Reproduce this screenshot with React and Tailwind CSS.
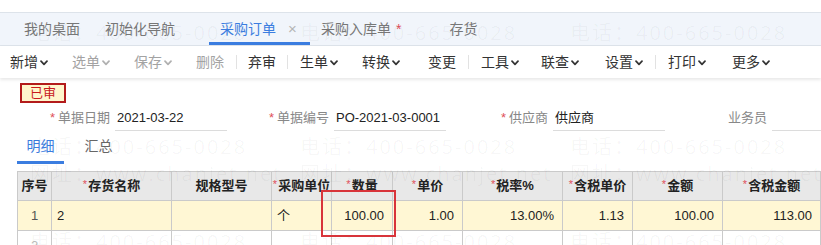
import React from 'react';

const FONT = { fontFamily: '"Liberation Sans", "Noto Sans CJK SC", sans-serif' };

const Chevron = ({ color = '#333' }) => (
    <svg width="8" height="6" viewBox="0 0 8 6" className="ml-[2px] mt-[1px]">
        <polyline points="1,1.2 4,4.4 7,1.2" fill="none" stroke={color} strokeWidth="1.7" strokeLinejoin="round" strokeLinecap="round" />
    </svg>
);

const Tool = ({ label, menu, disabled, ml }) => (
    <div className={`flex items-center ${ml} ${disabled ? 'text-[#a3a3a3]' : 'text-[#333]'}`}>
        <span>{label}</span>
        {menu && <Chevron color={disabled ? '#b0b0b0' : '#333'} />}
    </div>
);

const Sep = ({ ml }) => <div className={`w-px h-[14px] bg-[#e2e2e2] ${ml}`} />;

const Field = ({ label, value, required }) => (
    <div className="flex items-end w-[219px]">
        <div className="w-[102px] h-[26px] flex items-center justify-end text-[13px] text-[#888] whitespace-nowrap">
            {required && <span className="text-[#e0505a] mr-[3px]">*</span>}
            {label}
        </div>
        <div className="w-[112px] ml-[5px] h-[26px] flex items-center border-b border-[#dcdcdc] pl-[2px] text-[13px] text-[#222] whitespace-nowrap">
            {value}
        </div>
    </div>
);

const cols = [
    { w: 'w-[34px]', label: '序号' },
    { w: 'w-[120px]', label: '存货名称', req: true },
    { w: 'w-[100px]', label: '规格型号' },
    { w: 'w-[60px]', label: '采购单位', req: true },
    { w: 'w-[61px]', label: '数量', req: true },
    { w: 'w-[70px]', label: '单价', req: true },
    { w: 'w-[100px]', label: '税率%', req: true },
    { w: 'w-[70px]', label: '含税单价', req: true },
    { w: 'w-[90px]', label: '金额', req: true },
    { w: 'w-[98px]', label: '含税金额', req: true },
];

const row1 = [
    { v: '1', a: 'justify-center text-[#555]' },
    { v: '2', a: 'justify-start pl-[5px]' },
    { v: '', a: '' },
    { v: '个', a: 'justify-start pl-[5px]' },
    { v: '100.00', a: 'justify-end pr-[8px]' },
    { v: '1.00', a: 'justify-end pr-[8px]' },
    { v: '13.00%', a: 'justify-end pr-[8px]' },
    { v: '1.13', a: 'justify-end pr-[8px]' },
    { v: '100.00', a: 'justify-end pr-[8px]' },
    { v: '113.00', a: 'justify-end pr-[8px]' },
];

const marks = [
    { t: '电话：400-665-0028', y: 'top-[18px]' },
    { t: '网址：www.chanjet.net', y: 'top-[47px]' },
    { t: '电话：400-665-0028', y: 'top-[132px]' },
    { t: '网址：www.chanjet.net', y: 'top-[159px]' },
    { t: '电话：400-665-0028', y: 'top-[227px]' },
];

export default function App() {
    return (
        <div className="relative w-[821px] h-[245px] overflow-hidden bg-white text-[14px]" style={FONT}>
            <div className="h-[12px] bg-white" />

            {/* tabs */}
            <div className="h-[34px] bg-[#f1f5fb] border-t border-b border-[#dde3ea] flex items-stretch whitespace-nowrap">
                <div className="flex items-center ml-[24px] text-[#777]">我的桌面</div>
                <div className="flex items-center ml-[25px] text-[#777]">初始化导航</div>
                <div className="flex items-center ml-[34px] w-[101px] pl-[11px] border-b-[3px] border-[#3b7de0] pt-[3px] text-[#3b7de0]">
                    采购订单
                    <span className="ml-[12px] text-[#b5b5b5] text-[15px]">×</span>
                </div>
                <div className="flex items-center pl-[11px] text-[#777]">
                    采购入库单<span className="text-[#e0505a] ml-[5px]">*</span>
                </div>
                <div className="flex items-center ml-[48px] text-[#777]">存货</div>
            </div>

            {/* toolbar */}
            <div className="relative z-10 h-[32px] bg-white flex items-center whitespace-nowrap shadow-[0_2px_3px_rgba(0,0,0,0.09)]">
                <Tool label="新增" menu ml="ml-[10px]" />
                <Tool label="选单" menu disabled ml="ml-[24px]" />
                <Tool label="保存" menu disabled ml="ml-[24px]" />
                <Tool label="删除" disabled ml="ml-[24px]" />
                <Sep ml="ml-[12px]" />
                <Tool label="弃审" ml="ml-[11px]" />
                <Sep ml="ml-[11px]" />
                <Tool label="生单" menu ml="ml-[12px]" />
                <Tool label="转换" menu ml="ml-[24px]" />
                <Tool label="变更" ml="ml-[28px]" />
                <Sep ml="ml-[12px]" />
                <Tool label="工具" menu ml="ml-[12px]" />
                <Tool label="联查" menu ml="ml-[22px]" />
                <Tool label="设置" menu ml="ml-[26px]" />
                <Sep ml="ml-[12px]" />
                <Tool label="打印" menu ml="ml-[12px]" />
                <Tool label="更多" menu ml="ml-[26px]" />
            </div>

            {/* status stamp */}
            <div className="ml-[20px] mt-[5px] w-[46px] h-[20px] border-2 border-[#b31b1b] bg-[#fff6cc] flex items-center justify-center text-[13px] text-[#c8191e]">
                已审
            </div>

            {/* header fields */}
            <div className="flex ml-[8px] mt-[2px]">
                <Field label="单据日期" value="2021-03-22" required />
                <Field label="单据编号" value="PO-2021-03-0001" required />
                <Field label="供应商" value="供应商" required />
                <Field label="业务员" value="" />
            </div>

            {/* detail tabs */}
            <div className="flex ml-[17px] h-[33px]">
                <div className="w-[47px] flex items-center justify-center pt-[1px] border-b-[3px] border-[#3b7de0] text-[#3b7de0]">明细</div>
                <div className="w-[47px] ml-[11px] flex items-center justify-center pb-[2px] text-[#666]">汇总</div>
            </div>

            {/* grid */}
            <div className="ml-[17px] mt-[7px] text-[13px] whitespace-nowrap">
                <div className="flex h-[30px] bg-[#e8e8e8] border-t border-l border-[#cacaca] font-bold text-[#222]">
                    {cols.map((c) => (
                        <div key={c.label} className={`${c.w} shrink-0 flex items-center justify-center border-r border-b border-[#cacaca] overflow-hidden`}>
                            {c.req && <span className="text-[#e0505a] font-normal text-[11px] mr-px -mt-[4px]">*</span>}
                            {c.label}
                        </div>
                    ))}
                </div>
                <div className="flex h-[30px] bg-[#fff7d4] border-l border-[#cacaca] text-[#222]">
                    {cols.map((c, i) => (
                        <div key={c.label} className={`${c.w} shrink-0 flex items-center border-r border-b border-[#cacaca] ${row1[i].a}`}>
                            {row1[i].v}
                        </div>
                    ))}
                </div>
                <div className="flex h-[30px] bg-white border-l border-[#cacaca]">
                    {cols.map((c, i) => (
                        <div key={c.label} className={`${c.w} shrink-0 flex items-center border-r border-[#cacaca] ${i === 0 ? 'justify-center text-[#bbb]' : ''}`}>
                            {i === 0 ? '2' : ''}
                        </div>
                    ))}
                </div>
            </div>

            {/* watermarks */}
            {marks.map((m, i) => (
                <div key={i} className={`absolute left-0 ${m.y} pointer-events-none flex`}>
                    {[30, 300, 570].map((x) => (
                        <span
                            key={x}
                            className="absolute whitespace-nowrap text-[20px] tracking-[2px] text-[rgba(0,0,0,0.04)]"
                            style={{ left: x, fontFamily: '"Open Sans", "Noto Sans CJK SC", sans-serif' }}
                        >
                            {m.t}
                        </span>
                    ))}
                </div>
            ))}

            {/* annotation box */}
            <div className="absolute left-[321px] top-[190px] w-[75px] h-[47px] border-2 border-[#d8343a] pointer-events-none" />
        </div>
    );
}
